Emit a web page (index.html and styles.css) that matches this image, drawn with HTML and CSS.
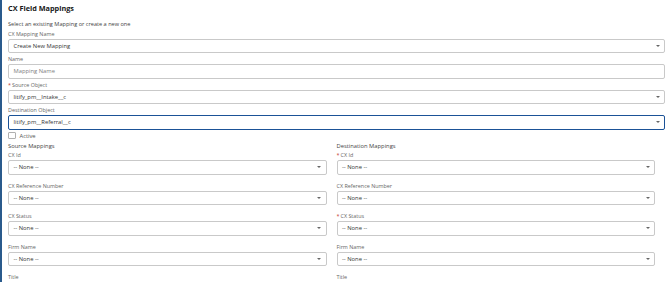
FILE: index.html
```html
<!DOCTYPE html>
<html>
<head>
<meta charset="utf-8">
<link rel="stylesheet" href="styles.css">
</head>
<body>
<div class="page">
  <h1 class="title">CX Field Mappings</h1>
  <p class="intro">Select an existing Mapping or create a new one</p>

  <div class="field">
    <div class="label">CX Mapping Name</div>
    <div class="select"><span>Create New Mapping</span><i class="caret"></i></div>
  </div>
  <div class="field">
    <div class="label">Name</div>
    <div class="input placeholder"><span>Mapping Name</span></div>
  </div>
  <div class="field">
    <div class="label"><abbr class="req">*</abbr>Source Object</div>
    <div class="select"><span>litify_pm__Intake__c</span><i class="caret"></i></div>
  </div>
  <div class="field">
    <div class="label">Destination Object</div>
    <div class="select focus"><span>litify_pm__Referral__c</span><i class="caret"></i></div>
  </div>
  <label class="check"><span class="box"></span><span>Active</span></label>

  <div class="cols">
    <div class="col">
      <div class="heading">Source Mappings</div>
      <div class="mfield"><div class="label">CX Id</div><div class="select"><span>-- None --</span><i class="caret"></i></div></div>
      <div class="mfield"><div class="label">CX Reference Number</div><div class="select"><span>-- None --</span><i class="caret"></i></div></div>
      <div class="mfield"><div class="label">CX Status</div><div class="select"><span>-- None --</span><i class="caret"></i></div></div>
      <div class="mfield"><div class="label">Firm Name</div><div class="select"><span>-- None --</span><i class="caret"></i></div></div>
      <div class="mfield"><div class="label">Title</div></div>
    </div>
    <div class="col">
      <div class="heading">Destination Mappings</div>
      <div class="mfield"><div class="label"><abbr class="req">*</abbr>CX Id</div><div class="select"><span>-- None --</span><i class="caret"></i></div></div>
      <div class="mfield"><div class="label">CX Reference Number</div><div class="select"><span>-- None --</span><i class="caret"></i></div></div>
      <div class="mfield"><div class="label"><abbr class="req">*</abbr>CX Status</div><div class="select"><span>-- None --</span><i class="caret"></i></div></div>
      <div class="mfield"><div class="label">Firm Name</div><div class="select"><span>-- None --</span><i class="caret"></i></div></div>
      <div class="mfield"><div class="label">Title</div></div>
    </div>
  </div>
</div>
</body>
</html>
```

FILE: styles.css
```css
html, body {
  margin: 0;
  padding: 0;
  background: #ffffff;
}
body {
  font-family: "Open Sans", "Noto Sans", sans-serif;
  color: #3e3e3c;
  overflow: hidden;
}
.page {
  box-sizing: border-box;
  height: 282px;
  border-left: 2px solid #2a5a8c;
  padding: 3px 5px 0 6px;
}
.title {
  margin: 0;
  font-size: 7.3px;
  line-height: 10px;
  font-weight: 700;
  color: #181818;
}
.intro {
  margin: 7px 0 0;
  font-size: 5.6px;
  line-height: 8px;
  color: #444444;
}
.label {
  font-size: 5.4px;
  line-height: 8px;
  color: #666666;
}
.req {
  color: #c23934;
  text-decoration: none;
  margin-right: 1px;
}
.field {
  margin-top: 1.5px;
}
.field + .field {
  margin-top: 2px;
}
.select, .input {
  box-sizing: border-box;
  height: 14.5px;
  margin-top: 1px;
  border: 1px solid #c9c9c9;
  border-radius: 2px;
  display: flex;
  align-items: center;
  padding: 0 4.5px 0 4.5px;
  font-size: 5.8px;
  color: #333333;
  background: #fff;
}
.select span, .input span {
  flex: 1;
}
.placeholder {
  color: #808080;
}
.select.focus {
  border: 1.5px solid #1b5297;
}
.caret {
  width: 0;
  height: 0;
  border-left: 2px solid transparent;
  border-right: 2px solid transparent;
  border-top: 2.4px solid #666666;
}
.check {
  display: flex;
  align-items: center;
  gap: 4px;
  margin-top: 2px;
  font-size: 5.8px;
  line-height: 8px;
  color: #555555;
}
.box {
  box-sizing: border-box;
  width: 7.5px;
  height: 7.5px;
  border: 1px solid #b0b0b0;
  border-radius: 1px;
}
.cols {
  display: grid;
  grid-template-columns: 1fr 1fr;
  margin-top: 2px;
}
.col {
  padding-right: 10px;
}
.heading {
  font-size: 5.8px;
  line-height: 8px;
  color: #444444;
}
.mfield {
  margin-top: 1.5px;
}
.mfield + .mfield {
  margin-top: 7px;
}
```
